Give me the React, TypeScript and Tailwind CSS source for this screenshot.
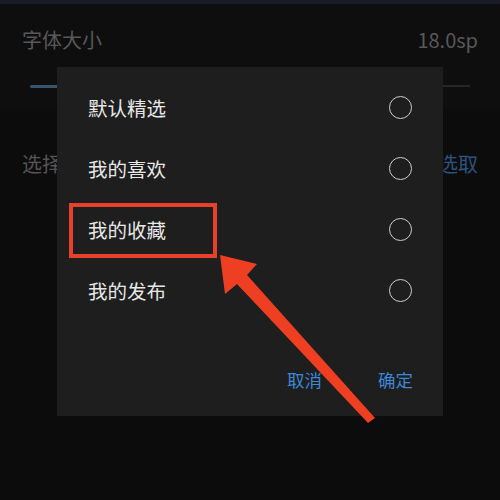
import React from "react";

const items = ["默认精选", "我的喜欢", "我的收藏", "我的发布"];

export default function App() {
  return (
    <div
      className="relative w-[500px] h-[500px] overflow-hidden bg-[#0e0e0e]"
      style={{ fontFamily: '"Noto Sans CJK SC", "Noto Sans", sans-serif' }}
    >
      {/* background page */}
      <div className="h-[4px] bg-[#1a1b25]" />
      <div className="flex items-center justify-between px-[22px] h-[74px] pb-[2px]">
        <span className="text-[20px] text-[#585858]">字体大小</span>
        <span className="text-[20px] text-[#585858]">18.0sp</span>
      </div>
      <div className="px-[30px] flex items-center h-[16px]">
        <div className="h-[3px] w-[27px] bg-[#3a5570] rounded-l-full" />
        <div className="h-[2px] flex-1 bg-[#262626]" />
      </div>
      <div className="h-[14px]" />
      <div className="bg-[#0c0c0c] h-[392px]">
        <div className="flex items-center justify-between px-[22px] h-[112px]">
          <span className="text-[20px] text-[#555555]">选择</span>
          <span className="text-[20px] text-[#2d5480]">选取</span>
        </div>
      </div>

      {/* dialog */}
      <div className="absolute left-[57px] top-[67px] w-[386px] h-[349px] bg-[#1e1e1e] pt-[10px] flex flex-col">
        {items.map((t) => (
          <div key={t} className="flex items-center justify-between h-[61px] pl-[31px] pr-[31px]">
            <span className="text-[19.5px] text-[#e8e8e8] leading-none">{t}</span>
            <span className="w-[23px] h-[23px] rounded-full border-[1.5px] border-[#cfcfcf]" />
          </div>
        ))}
        <div className="flex justify-end items-center gap-[56px] pr-[30px] mt-[46px]">
          <span className="text-[17.5px] text-[#3b87d8]">取消</span>
          <span className="text-[17.5px] text-[#3b87d8]">确定</span>
        </div>
      </div>

      {/* red highlight box */}
      <div className="absolute left-[69px] top-[203px] w-[148px] h-[55px] border-[4px] border-[#e8402a]" />

      {/* arrow */}
      <svg className="absolute left-0 top-0" width="500" height="500" viewBox="0 0 500 500">
        <polygon
          points="220,255 257,264 247,275 375,418 368,423 237,284 225,294"
          fill="#ee3f22"
        />
      </svg>
    </div>
  );
}
